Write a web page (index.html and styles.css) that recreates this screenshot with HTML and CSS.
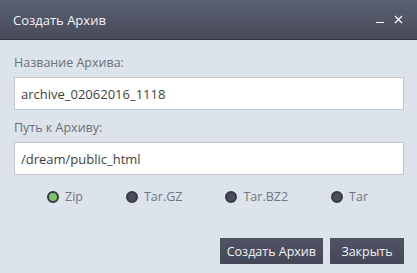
FILE: index.html
```html
<!DOCTYPE html>
<html lang="ru">
<head>
    <meta charset="UTF-8">
    <meta name="viewport" content="width=device-width, initial-scale=1.0">
    <title>Создать Архив</title>
    <link rel="stylesheet" href="styles.css">
</head>
<body>
    <div class="dialog">
        <div class="dialog-header">
            <span class="dialog-title">Создать Архив</span>
            <div class="dialog-controls">
                <span class="ctrl ctrl-min"></span>
                <svg class="ctrl ctrl-close" width="9" height="9" viewBox="0 0 9 9">
                    <path d="M1 1 L8 8 M8 1 L1 8" stroke="#f2f3f6" stroke-width="1.4" fill="none"/>
                </svg>
            </div>
        </div>

        <div class="dialog-body">
            <label class="field-label" for="archiveName">Название Архива:</label>
            <input class="field-input" type="text" id="archiveName" value="archive_02062016_1118">

            <label class="field-label" for="archivePath">Путь к Архиву:</label>
            <input class="field-input" type="text" id="archivePath" value="/dream/public_html">

            <div class="formats">
                <label class="format active"><span class="dot"></span>Zip</label>
                <label class="format"><span class="dot"></span>Tar.GZ</label>
                <label class="format"><span class="dot"></span>Tar.BZ2</label>
                <label class="format"><span class="dot"></span>Tar</label>
            </div>

            <div class="actions">
                <button class="btn">Создать Архив</button>
                <button class="btn btn-close">Закрыть</button>
            </div>
        </div>
    </div>
</body>
</html>
```

FILE: styles.css
```css
body {
    margin: 0;
    padding: 0;
    font-family: "Open Sans", "Noto Sans", sans-serif;
    background-color: #dde3ea;
}

.dialog {
    width: 417px;
    height: 273px;
    background-color: #dde3ea;
}

.dialog-header {
    height: 39px;
    display: flex;
    align-items: center;
    justify-content: space-between;
    padding: 0 14px 0 13px;
    background: linear-gradient(#5b6073, #474b59);
    border-bottom: 1px solid #30333d;
}

.dialog-title {
    color: #f2f3f6;
    font-size: 13px;
}

.dialog-controls {
    display: flex;
    align-items: center;
    gap: 10px;
}

.ctrl-min {
    display: block;
    width: 8px;
    height: 1px;
    margin-top: 6px;
    background-color: #f2f3f6;
}

.ctrl-close {
    display: block;
}

.dialog-body {
    padding: 14px 13px 0 14px;
}

.field-label {
    display: block;
    color: #6b7079;
    font-size: 12.5px;
    line-height: 18px;
    margin-bottom: 5px;
}

.field-input {
    display: block;
    box-sizing: border-box;
    width: 390px;
    height: 33px;
    margin: 0 0 9px;
    padding: 0 6px;
    border: 1px solid #c3c6ca;
    background-color: #fff;
    color: #3c3f45;
    font-family: inherit;
    font-size: 13px;
    outline: none;
}

.formats {
    display: flex;
    justify-content: center;
    gap: 43px;
    margin-top: 13px;
    margin-left: -16px;
    margin-right: -13px;
}

.format {
    display: flex;
    align-items: center;
    gap: 6px;
    color: #72767f;
    font-size: 12.5px;
}

.dot {
    width: 8px;
    height: 8px;
    border-radius: 50%;
    border: 2px solid #373a44;
    background-color: #4a4e5c;
}

.format.active .dot {
    background-color: #7cc46a;
    border-color: #353943;
}

.actions {
    display: flex;
    justify-content: flex-end;
    gap: 7px;
    margin-top: 33px;
}

.btn {
    height: 26px;
    padding: 0 7px;
    border: none;
    background: linear-gradient(#4f5465, #434756);
    color: #f2f3f6;
    font-family: inherit;
    font-size: 12.5px;
    cursor: pointer;
}

.btn-close {
    min-width: 74px;
}
```
